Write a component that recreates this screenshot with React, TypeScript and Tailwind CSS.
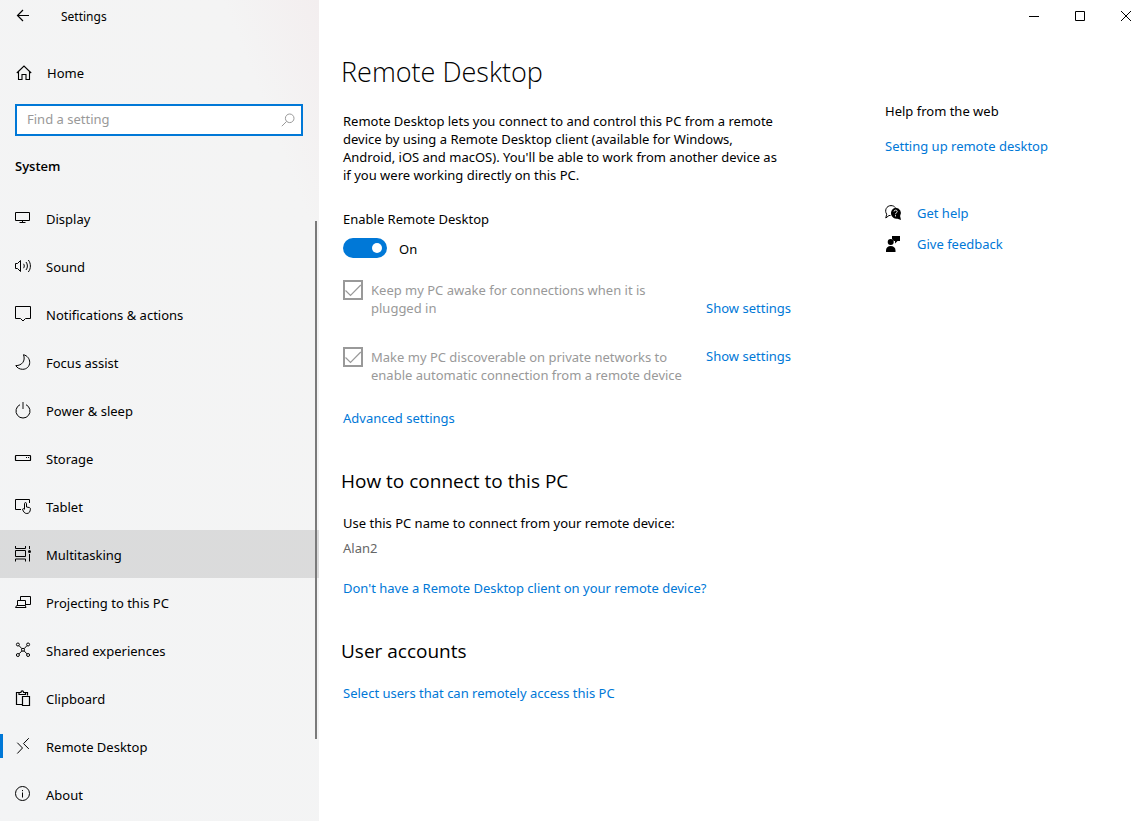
import React, { useState } from "react";

interface NavItem {
  label: string;
  icon: React.ReactNode;
}

const Icon: React.FC<{ children: React.ReactNode }> = ({ children }) => (
  <svg
    width="16"
    height="16"
    viewBox="0 0 16 16"
    fill="none"
    stroke="#000"
    className="shrink-0 overflow-visible"
    aria-hidden="true"
  >
    {children}
  </svg>
);

const navItems: NavItem[] = [
  {
    label: "Display",
    icon: <path d="M.5 2.5h14v8H.5zM7.5 10.5v2M4.5 12.5h6" />,
  },
  {
    label: "Sound",
    icon: (
      <>
        <path d="M.5 5.5h2l3-3v11l-3-3h-2z" />
        <path d="M8.500 5.800c1 1.300 1 3.100 0 4.400M11 4c1.900 2.300 1.900 5.700 0 8M13.300 2c2.800 3.400 2.800 8.600 0 12" />
      </>
    ),
  },
  {
    label: "Notifications & actions",
    icon: <path d="M.5.5h15v12h-5L8 15l-2.500-2.500h-5z" />,
  },
  {
    label: "Focus assist",
    icon: (
      <path d="M8.500.7c3.900 1 6.200 4.100 6.200 7.700 0 4-3 6.900-7 6.900-3 0-5.600-1.400-6.900-3.700C6.800 11.700 10.800 7 8.500.7z" />
    ),
  },
  {
    label: "Power & sleep",
    icon: (
      <>
        <path d="M5 2.700a7 7 0 1 0 6 0" />
        <path d="M8 0v7" stroke="#666" strokeWidth="1.600" />
      </>
    ),
  },
  {
    label: "Storage",
    icon: (
      <>
        <rect x=".5" y="5.500" width="15" height="5" rx=".6" strokeWidth="1.200" />
        <path d="M11 7.500h1M13 7.500h1" />
      </>
    ),
  },
  {
    label: "Tablet",
    icon: (
      <>
        <path d="M6 11.500H.5v-10h14V5" />
        <path d="M9.500 11V5.700c0-1.500 2-1.500 2 0V9l2.700.5c1 .2 1.300.7 1.200 1.700-.2 2.600-1.300 4.300-3.600 4.300-2.200 0-3.400-1.700-4.300-4.300.8-.9 1.500-.6 2 .3" />
      </>
    ),
  },
  {
    label: "Multitasking",
    icon: (
      <>
        <path d="M.5 0v2.500h10V0M.5 4.500h10v6H.5zM.5 15.500v-2.500h10v2.500M14.500 0v3M14.500 8v7.500" />
        <circle cx="14.500" cy="5.500" r="1.500" fill="#000" stroke="none" />
      </>
    ),
  },
  {
    label: "Projecting to this PC",
    icon: <path d="M5.500 6V2.500h10v8H11M2.500 11.500v-5h8v5M.5 13.500l1.200-2h8.600l.7 2z" />,
  },
  {
    label: "Shared experiences",
    icon: (
      <>
        <circle cx="2.900" cy="2.500" r="1.500" />
        <circle cx="13.100" cy="2.500" r="1.500" />
        <circle cx="2.900" cy="13" r="1.500" />
        <circle cx="13.100" cy="13" r="1.500" />
        <circle cx="8" cy="7.800" r="1.500" />
        <path d="M4 3.600l3 3.200M12 3.600L9 6.800M4 11.900l3-3.100M12 11.900L9 8.800" />
      </>
    ),
  },
  {
    label: "Clipboard",
    icon: (
      <>
        <path d="M7 14.500H1.500v-12h3M10.500 2.500h2V5.500" strokeWidth="1.200" />
        <path d="M4 4.500v-2h1.900c.2-2.200 2.500-2.200 2.700 0h1.900v2zM7.500 6.500h7v9h-7z" strokeWidth="1.200" />
      </>
    ),
  },
  {
    label: "Remote Desktop",
    icon: <path d="M2.300 4.700l5.200 5.300-5.200 5.500M13.800.2L8.500 5.600l5.300 5.300" />,
  },
  {
    label: "About",
    icon: (
      <>
        <circle cx="7.500" cy="7.500" r="7" />
        <path d="M7.500 6.500v5M7.500 4v1.200" />
      </>
    ),
  },
];

const Link: React.FC<{ children: React.ReactNode }> = ({ children }) => (
  <a href="#" className="text-[#0078d7] hover:text-gray-500">
    {children}
  </a>
);

const SectionTitle: React.FC<{ children: React.ReactNode }> = ({ children }) => (
  <h2 className="mt-10 -ml-0.5 font-['Open_Sans',sans-serif] text-[19px] leading-7">{children}</h2>
);

const DisabledCheck: React.FC<{ id: string; label: string }> = ({ id, label }) => (
  <div className="flex gap-2">
    <div className="relative h-5 w-5 shrink-0">
      <input
        id={id}
        type="checkbox"
        defaultChecked
        disabled
        className="block h-5 w-5 appearance-none border-2 border-[#999] bg-white"
      />
      <svg
        viewBox="0 0 20 20"
        fill="none"
        stroke="#999"
        strokeWidth="1.200"
        className="pointer-events-none absolute inset-0 h-5 w-5"
        aria-hidden="true"
      >
        <path d="M2.500 10.500l5 5L17.800 5" />
      </svg>
    </div>
    <label htmlFor={id} className="w-80 pt-px text-[#999]">
      {label}
    </label>
  </div>
);

const Sidebar: React.FC = () => (
  <aside className="flex w-[319px] shrink-0 flex-col bg-linear-to-bl from-[#f3eeef] via-[#f4f4f4] via-15% to-[#f3f4f5]">
    <header className="flex h-8 items-center gap-7 pl-4 text-xs">
      <button aria-label="Back" className="h-4 w-4">
        <Icon>
          <path d="M1.500 7.500H13M7 2L1.500 7.500 7 13" strokeWidth="1.200" />
        </Icon>
      </button>
      <span className="pt-[2px] pl-px">Settings</span>
    </header>

    <a href="#" className="mt-[17px] flex h-12 items-center gap-[15px] pl-4">
      <Icon>
        <path d="M.8 8L8 1l7.200 7M2.500 6.500v8h3.500V9.500h4v5h3.500v-8" strokeWidth="1.100" />
      </Icon>
      Home
    </a>

    <div className="relative mt-[7px] mr-4 ml-[15px]">
      <input
        type="text"
        aria-label="Find a setting"
        placeholder="Find a setting"
        className="block h-8 w-full border-2 border-[#0078d7] bg-white px-[10px] pb-[2px] outline-none placeholder:text-[#999]"
      />
      <svg
        viewBox="0 0 14 14"
        fill="none"
        stroke="#999"
        className="pointer-events-none absolute top-[9px] right-2 h-[14px] w-[14px]"
        aria-hidden="true"
      >
        <circle cx="8.700" cy="5.300" r="4.300" />
        <path d="M5.700 8.300L.8 13.200" />
      </svg>
    </div>

    <h2 className="mt-[21px] pl-[15px] font-['Open_Sans',sans-serif] font-semibold">System</h2>

    <nav className="relative mt-[19px] grow">
      <ul>
        {navItems.map((item) => {
          const active = item.label === "Remote Desktop";
          const hovered = item.label === "Multitasking";

          return (
            <li key={item.label}>
              <a
                href="#"
                aria-current={active ? "page" : undefined}
                className={`relative flex h-12 items-center gap-[15px] pl-[15px] hover:bg-black/10 ${
                  hovered ? "bg-black/10" : ""
                }`}
              >
                {active && <span className="absolute left-0 h-6 w-[3px] bg-[#0078d7]" />}
                <Icon>{item.icon}</Icon>
                <span className="pt-[2px]">{item.label}</span>
              </a>
            </li>
          );
        })}
      </ul>
      <div className="absolute top-[27px] right-[2px] h-[518px] w-[2px] bg-[#7a7a7a]" />
    </nav>
  </aside>
);

const WindowButtons: React.FC = () => (
  <div className="flex h-8 justify-end gap-2">
    <button aria-label="Minimize" className="flex w-[38px] items-center justify-center">
      <svg width="10" height="10" viewBox="0 0 10 10" stroke="#000">
        <path d="M0 5.500h10" />
      </svg>
    </button>
    <button aria-label="Maximize" className="flex w-[38px] items-center justify-center">
      <svg width="10" height="10" viewBox="0 0 10 10" fill="none" stroke="#000">
        <path d="M.5.5h9v9h-9z" />
      </svg>
    </button>
    <button aria-label="Close" className="flex w-[38px] items-center justify-center">
      <svg width="10" height="10" viewBox="0 0 10 10" stroke="#000">
        <path d="M0 0l10 10M10 0L0 10" />
      </svg>
    </button>
  </div>
);

const App: React.FC = () => {
  const [enabled, setEnabled] = useState(true);

  return (
    <div className="flex min-h-screen bg-white font-['Noto_Sans','Open_Sans',sans-serif] text-[13px] leading-[18px] text-black">
      <Sidebar />

      <div className="flex grow flex-col">
        <WindowButtons />

        <div className="flex gap-[94px] pt-5 pl-6">
          <main className="w-[448px]">
            <h1 className="-ml-0.5 font-['Open_Sans',sans-serif] text-[27px] leading-10 font-light">
              Remote Desktop
            </h1>

            <p className="mt-5 pr-1.5">
              Remote Desktop lets you connect to and control this PC from a remote device by using a
              Remote Desktop client (available for Windows, Android, iOS and macOS). You'll be able
              to work from another device as if you were working directly on this PC.
            </p>

            <p id="enable-label" className="mt-[26px]">
              Enable Remote Desktop
            </p>
            <div className="mt-[10px] flex items-center gap-3">
              <button
                role="switch"
                aria-checked={enabled}
                aria-labelledby="enable-label"
                onClick={() => setEnabled(!enabled)}
                className={`flex h-5 w-11 items-center rounded-full px-[5px] ${
                  enabled ? "justify-end bg-[#0078d7]" : "justify-start bg-gray-500"
                }`}
              >
                <span className="h-[10px] w-[10px] rounded-full bg-white" />
              </button>
              <span className="pt-[2px]">{enabled ? "On" : "Off"}</span>
            </div>

            <div className="mt-[22px] flex items-end justify-between">
              <DisabledCheck
                id="awake"
                label="Keep my PC awake for connections when it is plugged in"
              />
              <Link>Show settings</Link>
            </div>

            <div className="mt-[30px] flex items-start justify-between">
              <DisabledCheck
                id="discoverable"
                label="Make my PC discoverable on private networks to enable automatic connection from a remote device"
              />
              <Link>Show settings</Link>
            </div>

            <p className="mt-[25px]">
              <Link>Advanced settings</Link>
            </p>

            <SectionTitle>How to connect to this PC</SectionTitle>
            <p className="mt-[19px]">Use this PC name to connect from your remote device:</p>
            <p className="mt-[7px] text-[#666]">Alan2</p>
            <p className="mt-[22px]">
              <Link>Don't have a Remote Desktop client on your remote device?</Link>
            </p>

            <SectionTitle>User accounts</SectionTitle>
            <p className="mt-[19px]">
              <Link>Select users that can remotely access this PC</Link>
            </p>
          </main>

          <aside className="pt-[50px]">
            <p>Help from the web</p>
            <p className="mt-[17px]">
              <Link>Setting up remote desktop</Link>
            </p>

            <div className="mt-[49px] flex items-center gap-4">
              <Icon>
                <path d="M5.500 10.500H4L.8 13l.9-3.800C-.8 5.500 1.500.6 6 .6c2 0 3.500.8 4.300 2" />
                <path
                  d="M10.500 2.800a5.300 5.300 0 0 1 4.600 8.200l.9 4-3.500-1.300a5.300 5.300 0 1 1-2-10.900z"
                  fill="#000"
                  stroke="none"
                />
                <path
                  d="M9 6.500c.1-1.900 3.300-1.800 3.200.1 0 1.200-1.700 1.200-1.700 2.600M10.500 10.200v1.200"
                  stroke="#fff"
                />
              </Icon>
              <Link>Get help</Link>
            </div>
            <div className="mt-[13px] flex items-center gap-4">
              <Icon>
                <g fill="#000" stroke="none">
                  <path d="M7 0h8v5h-2.500L10 7.500V5H8.800L7 3z" />
                  <circle cx="5.700" cy="6" r="3" />
                  <path d="M1 16v-1.500C1 11.500 3 10 5.700 10s4.800 1.500 4.800 4.500V16z" />
                </g>
              </Icon>
              <Link>Give feedback</Link>
            </div>
          </aside>
        </div>
      </div>
    </div>
  );
};

export default App;
